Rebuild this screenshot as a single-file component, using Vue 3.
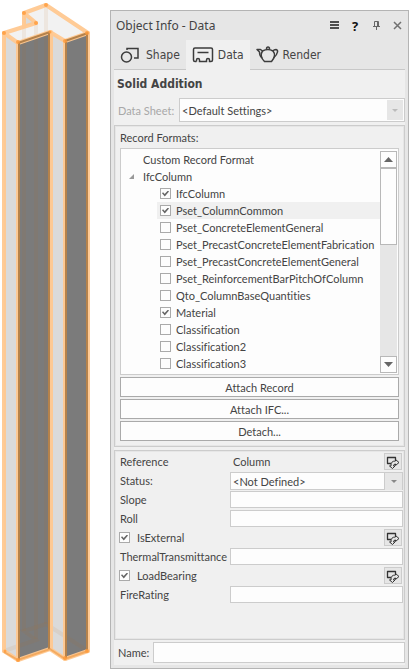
<script setup>
import { ref } from 'vue'

const tabs = ['Shape', 'Data', 'Render']
const activeTab = ref('Data')

const records = ref([
  { name: 'IfcColumn', on: true },
  { name: 'Pset_ColumnCommon', on: true },
  { name: 'Pset_ConcreteElementGeneral', on: false },
  { name: 'Pset_PrecastConcreteElementFabrication', on: false },
  { name: 'Pset_PrecastConcreteElementGeneral', on: false },
  { name: 'Pset_ReinforcementBarPitchOfColumn', on: false },
  { name: 'Qto_ColumnBaseQuantities', on: false },
  { name: 'Material', on: true },
  { name: 'Classification', on: false },
  { name: 'Classification2', on: false },
  { name: 'Classification3', on: false },
])
const selected = ref('Pset_ColumnCommon')

const fields = ref([
  { label: 'Reference', kind: 'text', value: 'Column', link: true },
  { label: 'Status:', kind: 'select', value: '<Not Defined>' },
  { label: 'Slope', kind: 'input', value: '' },
  { label: 'Roll', kind: 'input', value: '' },
  { label: 'IsExternal', kind: 'check', value: true, link: true },
  { label: 'ThermalTransmittance', kind: 'input', value: '' },
  { label: 'LoadBearing', kind: 'check', value: true, link: true },
  { label: 'FireRating', kind: 'input', value: '' },
])
const objectName = ref('')
</script>

<template>
  <main class="screen">
    <svg class="column" viewBox="0 0 100 671" aria-hidden="true">
      <path d="M4 33L35 23L24 13L46 5L88 33L65 41L50 32L18 43Z" fill="#f2f2f2" />
      <path d="M24 13L36 23L24 27Z" fill="#dadada" />
      <path d="M4 33L18 43V660L4 651Z" fill="#dadada" />
      <path d="M50 32L65 41V659L50 649Z" fill="#dadada" />
      <path d="M18 43L50 32V649L18 660Z" fill="#7b7b7b" />
      <path d="M65 41L88 33V651L65 659Z" fill="#7b7b7b" />
      <g fill="none" stroke="#c06c20" stroke-opacity=".09" stroke-width="4">
        <path d="M24 27V631M36 23V639M46 5V624" />
        <path d="M4 651L36 640L24 631L46 624L88 651" />
      </g>
      <g fill="none" stroke="#ffc890" stroke-opacity=".95" stroke-width="4" stroke-linejoin="round" stroke-linecap="round">
        <path d="M4 33L36 23L24 13L46 5L88 33L65 41L50 32L18 43Z" />
        <path d="M24 13V26M4 33V651M88 33V651" />
        <path d="M18 43V660M51 32V649M65 41V659" />
        <path d="M4 651L18 660L50 649L65 659L88 651" />
      </g>
      <g fill="none" stroke="#b5824b" stroke-width="2">
        <path d="M19 43V660M49 33V649M66 42V658M87 34V650" />
        <path d="M18 43L50 32M65 41L88 33" />
      </g>
      <path d="M4 652L18 660L50 649L65 659L88 651" fill="none" stroke="#f09c48" stroke-opacity=".7" stroke-width="2" />
      <g fill="#ff9a38" fill-opacity=".8">
        <circle cx="46" cy="5" r="2" /><circle cx="24" cy="13" r="2" />
        <circle cx="36" cy="23" r="2" /><circle cx="4" cy="33" r="2" />
        <circle cx="18" cy="42" r="2" /><circle cx="50" cy="32" r="1.500" />
        <circle cx="65" cy="41" r="2" /><circle cx="87" cy="33" r="2" />
        <circle cx="5" cy="651" r="1.500" /><circle cx="18" cy="660" r="2" />
        <circle cx="65" cy="658" r="2" /><circle cx="87" cy="651" r="2" />
      </g>
    </svg>

    <section class="panel">
      <header class="titlebar">
        <h1>Object Info - Data</h1>
        <button type="button" aria-label="Menu">
          <svg width="11" height="11" viewBox="0 0 11 11"><path d="M1 2H10M1 5H10M1 8H10" stroke="#4c4c4c" stroke-width="2" /></svg>
        </button>
        <button type="button" class="help">?</button>
        <button type="button" aria-label="Pin">
          <svg width="11" height="11" viewBox="0 0 11 11" fill="none" stroke="#666"><path d="M3.500 6V1.500H7.500V6M6.500 1V6M2 6.500H9M5.500 7V10" /></svg>
        </button>
        <button type="button" aria-label="Close">
          <svg width="11" height="11" viewBox="0 0 11 11"><path d="M2 2L9 9M9 2L2 9" stroke="#707070" stroke-width="1.500" /></svg>
        </button>
      </header>

      <nav class="tabs">
        <button v-for="t in tabs" :key="t" type="button" :class="{ active: t === activeTab }" @click="activeTab = t">
          <svg v-if="t === 'Shape'" width="22" height="18" viewBox="0 0 22 18" fill="none" stroke="#3c3c3c" stroke-width="1.500">
            <circle cx="6.500" cy="11" r="5" /><path d="M7 4V2.500H18V12H14" />
          </svg>
          <svg v-else-if="t === 'Data'" width="22" height="18" viewBox="0 0 22 18" fill="none" stroke="#3c3c3c" stroke-width="1.500">
            <path d="M4.500 15.500H3Q1.500 15.500 1.500 14V3.500Q1.500 2 3 2H19Q20.500 2 20.500 3.500V14Q20.500 15.500 19 15.500H17.500V14Q17.500 12.500 16 12.500Q14.500 12.500 14.500 14V15.500H7.500V14Q7.500 12.500 6 12.500Q4.500 12.500 4.500 14V15.500" />
            <path d="M5.500 6.500H16.500" />
          </svg>
          <svg v-else width="23" height="18" viewBox="0 0 23 18" fill="none" stroke="#3c3c3c" stroke-width="1.500" stroke-linejoin="round">
            <path d="M6.500 5C4.500 8 5 12 8.500 15.500H15.500C18.500 12 19.500 8 17 5Q12 2 6.500 5Z" />
            <path d="M10.500 3Q10.500 1 12 1Q13.500 1 13.500 3M6.500 5L4.500 3.500H1L3.500 6Q3.500 10 6 12M17 5Q18 3.500 20 3.500Q22 4 21.500 6Q21 9 17.500 12" />
          </svg>
          {{ t }}
        </button>
      </nav>

      <div class="body">
        <h2>Solid Addition</h2>
        <div class="sheet">
          <label for="sheet">Data Sheet:</label>
          <div class="picker">
            <select id="sheet"><option>&lt;Default Settings&gt;</option></select>
            <span class="drop faint"></span>
          </div>
        </div>

        <section class="group records">
          <h3>Record Formats:</h3>
          <div class="listbox">
            <div class="tree">
              <div class="row root">Custom Record Format</div>
              <div class="row root open">
                <svg width="5" height="5" viewBox="0 0 5 5"><path d="M5 0V5H0Z" fill="#999" /></svg>
                IfcColumn
              </div>
              <label v-for="r in records" :key="r.name" class="row leaf" :class="{ selected: r.name === selected }" @click="selected = r.name">
                <input v-model="r.on" type="checkbox">{{ r.name }}
              </label>
            </div>
            <div class="scrollbar">
              <button type="button" aria-label="Scroll up">
                <svg width="9" height="5" viewBox="0 0 9 5"><path d="M0 5L4.500 0L9 5Z" fill="#666" /></svg>
              </button>
              <div class="thumb"></div>
              <button type="button" class="down" aria-label="Scroll down">
                <svg width="9" height="5" viewBox="0 0 9 5"><path d="M0 0L4.500 5L9 0Z" fill="#666" /></svg>
              </button>
            </div>
          </div>
          <button type="button" class="wide">Attach Record</button>
          <button type="button" class="wide">Attach IFC...</button>
          <button type="button" class="wide">Detach...</button>
        </section>

        <section class="group props">
          <div v-for="f in fields" :key="f.label" class="prop">
            <label v-if="f.kind === 'check'" class="check"><input v-model="f.value" type="checkbox">{{ f.label }}</label>
            <label v-else-if="f.kind !== 'text'" class="name" :for="f.label">{{ f.label }}</label>
            <span v-else class="name">{{ f.label }}</span>
            <span v-if="f.kind === 'text'" class="value">{{ f.value }}</span>
            <div v-else-if="f.kind === 'select'" class="picker">
              <select :id="f.label"><option>{{ f.value }}</option></select>
              <span class="drop"></span>
            </div>
            <input v-else-if="f.kind === 'input'" :id="f.label" v-model="f.value" class="field" type="text">
            <button v-if="f.link" type="button" class="link" :aria-label="f.label + ' source'">
              <svg width="14" height="14" viewBox="0 0 14 14" fill="none" stroke="#333" stroke-linejoin="round">
                <path d="M5 8.500H1.500V2.500H9.500V5" stroke-width="1.300" /><path d="M9.500 4.500L13 7.500L9.500 10.500V9Q7.500 9 7.500 11H9L6.500 13.500L3.500 11H5Q4.500 6 9.500 6Z" />
              </svg>
            </button>
          </div>
        </section>

        <div class="naming">
          <label for="objname">Name:</label>
          <input id="objname" v-model="objectName" class="field" type="text">
        </div>
      </div>
    </section>
  </main>
</template>

<style>
body { background: #fff; }
</style>

<style scoped>
* { box-sizing: border-box; }
.screen {
  display: flex;
  align-items: flex-start;
  padding-right: 2px;
  font: 11px/17px Lato, "Liberation Sans", sans-serif;
  font-variant-ligatures: none;
  color: #444;
}
.column { flex: none; width: 100px; height: auto; margin-right: 10px; }
.panel {
  flex: 1;
  min-width: 0;
  margin-top: 10px;
  padding: 0 3px 3px;
  background: #e6e6e6;
  border: 1px solid #b4b4b4;
}
button, input, select { font: inherit; font-variant-ligatures: none; color: inherit; margin: 0; }
button { padding: 0; border: 0; background: none; display: flex; align-items: center; justify-content: center; }
h1, h2, h3 { margin: 0; font-weight: normal; }

.titlebar { display: flex; align-items: center; gap: 5px; height: 29px; padding-left: 2px; }
.titlebar h1 { flex: 1; font: 12px/18px "Noto Sans", sans-serif; }
.titlebar button { width: 16px; height: 16px; }
.titlebar .help { font: bold 13px/16px "Open Sans", sans-serif; color: #111; }

.tabs { display: flex; height: 30px; border-bottom: 1px solid #c8c8c8; }
.tabs button {
  height: 29px;
  gap: 4px;
  padding: 0 6px;
  font: 12px/18px "DejaVu Sans Condensed", "DejaVu Sans", sans-serif;
}
.tabs .active { background: #f0f0f0; height: 30px; }

.body { background: #f0f0f0; padding-bottom: 2px; }
h2 { padding: 5px 3px 4px; font: bold 12px/19px "DejaVu Sans Condensed", "DejaVu Sans", sans-serif; }
.sheet { display: flex; align-items: center; margin-bottom: 3px; }
.sheet label { width: 65px; padding-left: 4px; color: #a8a8a8; white-space: nowrap; }
.sheet .picker { height: 24px; }
.picker {
  flex: 1;
  display: grid;
  grid-template-columns: 1fr 18px;
  height: 19px;
  border: 1px solid #ccc;
  background: #fdfdfd;
}
.picker select { appearance: none; grid-area: 1 / 1 / 2 / 3; padding: 0 20px 0 2px; border: 0; background: none; }
.drop { grid-area: 1 / 2; display: grid; place-items: center; background: #e6e6e6; border-left: 1px solid #ccc; pointer-events: none; }
.drop::after { content: ""; border: 3px solid transparent; border-top-color: #888; border-bottom: 0; }
.faint { border: 0; margin: 1px; }
.faint::after { border-top-color: #bbb; }

.group { border: 1px solid #ccc; box-shadow: inset 0 0 0 1px #e6e6e6; }
.records { display: grid; grid-template-columns: minmax(0, 1fr); gap: 2px; padding: 4px 5px 5px; }
h3 { font-size: 11px; line-height: 16px; }
.listbox { display: flex; height: 227px; padding: 2px 1px 1px 0; background: #fdfdfd; border: 1px solid #ccc; }
.tree { flex: 1; min-width: 0; overflow: hidden; }
.row { height: 17px; display: flex; align-items: center; white-space: nowrap; line-height: 15px; }
.root { padding-left: 22px; }
.open { padding-left: 8px; gap: 9px; }
.leaf { margin-left: 36px; padding-left: 3px; gap: 5px; }
.selected { background: #f0f0f0; }
input[type="checkbox"] { appearance: none; flex: none; width: 11px; height: 11px; background: #fdfdfd; border: 1px solid #aaa; display: grid; place-items: center; }
input[type="checkbox"]:checked::before { content: ""; width: 7px; height: 6px; background: #666; clip-path: polygon(0 45%, 15% 30%, 38% 60%, 85% 0, 100% 15%, 40% 100%); }

.scrollbar { flex: none; width: 17px; display: flex; flex-direction: column; background: #e6e6e6; }
.scrollbar button { height: 17px; border: 1px solid #b8b8b8; background: #fdfdfd; }
.scrollbar .down { margin-top: auto; }
.thumb { height: 77px; border: 1px solid #b8b8b8; background: #fdfdfd; }
.wide { height: 20px; background: #fdfdfd; border: 1px solid #aaa; }

.props { margin-top: 3px; padding: 1px 1px 35px 5px; }
.prop { display: flex; align-items: center; height: 19px; }
.name { flex: none; width: 110px; }
.value { flex: 1; padding-left: 3px; }
.check { flex: 1; display: flex; align-items: center; gap: 7px; margin-left: -1px; }
.field { flex: 1; min-width: 0; height: 17px; padding: 0 3px; background: #fdfdfd; border: 1px solid #ccc; }
.prop .picker { height: 18px; }
.link { width: 18px; height: 17px; background: #e6e6e6; border: 1px solid #ccc; margin-right: 1px; }
.naming { display: flex; align-items: center; margin-top: 2px; }
.naming label { width: 39px; padding-left: 4px; }
.naming .field { height: 21px; }
</style>
